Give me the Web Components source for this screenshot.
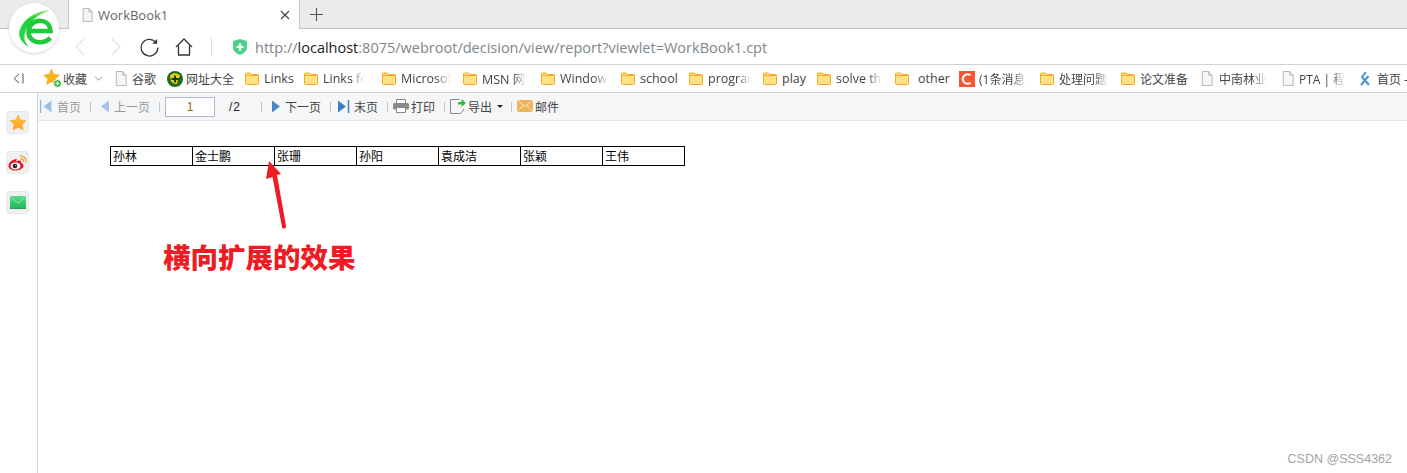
<!DOCTYPE html>
<html lang="zh"><head><meta charset="utf-8"><title>WorkBook1</title>
<style>
html,body{margin:0;padding:0;background:#fff;height:473px;overflow:hidden}
body{font-family:"Open Sans","Noto Sans CJK SC",sans-serif;position:relative;display:flex;flex-direction:column}
</style></head><body>
<browser-tabs></browser-tabs>
<browser-nav></browser-nav>
<bookmark-bar>
  <book-mark w="71" icon="star" gap="5" s="12">收藏<span slot="after" style="display:inline-flex;margin-left:7px"><svg width="9" height="5" viewBox="0 0 10 6"><path d="M1 1l4 4 4-4" fill="none" stroke="#777" stroke-width="1"/></svg></span></book-mark>
  <book-mark w="52" icon="doc" gap="3" s="12">谷歌</book-mark>
  <book-mark w="78" icon="globe" gap="5" s="12">网址大全</book-mark>
  <book-mark w="59" icon="folder">Links</book-mark>
  <book-mark w="78" icon="folder" fade="41">Links for</book-mark>
  <book-mark w="81" icon="folder" fade="50">Microsoft</book-mark>
  <book-mark w="78" icon="folder" fade="44">MSN 网址</book-mark>
  <book-mark w="80" icon="folder" fade="48">Windows</book-mark>
  <book-mark w="68" icon="folder">school</book-mark>
  <book-mark w="74" icon="folder" fade="43">program</book-mark>
  <book-mark w="54" icon="folder">play</book-mark>
  <book-mark w="78" icon="folder" fade="46">solve the</book-mark>
  <book-mark w="64" icon="folder" gap="9">other</book-mark>
  <book-mark w="81" icon="csdn" gap="6" fade="48" s="12">(1条消息)</book-mark>
  <book-mark w="81" icon="folder" fade="50" s="12">处理问题</book-mark>
  <book-mark w="80" icon="folder" s="12">论文准备</book-mark>
  <book-mark w="81" icon="doc" gap="4" fade="48" s="12">中南林业</book-mark>
  <book-mark w="78" icon="doc" gap="3" fade="46" s="12">PTA | 程序</book-mark>
  <book-mark w="47" icon="leaf" gap="3" s="12">首页 -</book-mark>
</bookmark-bar>
<main-area>
  <side-bar slot="side"></side-bar>
  <report-toolbar slot="top"></report-toolbar>
  <report-table slot="body"></report-table>
</main-area>
<red-note></red-note>
<app-logo></app-logo>
<water-mark>CSDN @SSS4362</water-mark>
<script>
const def=(name,html)=>{customElements.define(name,class extends HTMLElement{
  constructor(){super();this.attachShadow({mode:'open'}).innerHTML=html}
})};
const icons={
 doc:`<svg width="12" height="15" viewBox="0 0 14 16" preserveAspectRatio="none"><path d="M1.500 .5h7.500l4 4v11h-11.500z" fill="#f6f6f6" stroke="#b0b0b0"/><path d="M9 .5v4h4" fill="none" stroke="#b0b0b0"/></svg>`,
 star:`<svg width="20" height="20" viewBox="0 0 20 20"><path d="M7.500 0l2.300 5.300 5.600.7-4.100 3.900 1.100 5.700-4.900-2.800-4.900 2.800 1.100-5.700L-.4 6 5.200 5.300z" fill="#f7b417" stroke="#eb9b10" stroke-width=".5"/><circle cx="13.500" cy="14.500" r="4" fill="#3cb44a" stroke="#fff"/><path d="M13.500 12.500v4M11.500 14.500h4" stroke="#fff" stroke-width="1.200"/></svg>`,
 globe:`<svg width="16" height="16" viewBox="0 0 16 16"><circle cx="8" cy="8" r="8" fill="#1d6b1e"/><path d="M3 5a6 6 0 0 1 10 0l-2 3-1 5a6 6 0 0 1-6-3z" fill="#f3d31a"/><path d="M8 4.500v7M4.500 8h7" stroke="#123c12" stroke-width="2.200"/></svg>`,
 folder:`<svg width="14" height="13" viewBox="0 0 14 13"><path d="M.5 2a1 1 0 0 1 1-1h4l1.500 1.500h5.500a1 1 0 0 1 1 1V11.500a1 1 0 0 1-1 1h-11a1 1 0 0 1-1-1z" fill="#ffe082" stroke="#f9a825"/><path d="M1 3.500h12" stroke="#f9a825"/></svg>`,
 csdn:`<svg width="16" height="16" viewBox="0 0 16 16"><rect width="16" height="16" fill="#fc5531"/><path d="M11.500 4.200A4.600 4.600 0 0 0 5 5a4.500 4.500 0 0 0 0 6 4.600 4.600 0 0 0 6.500.8" fill="none" stroke="#fff" stroke-width="2"/></svg>`,
 leaf:`<svg width="10" height="15" viewBox="0 0 10 15"><path d="M6 1L2 6l7 8M8.500 5L1 14" fill="none" stroke="#4e94d4" stroke-width="2"/></svg>`
};
def('browser-tabs',`<style>
:host{display:flex;height:29px;flex:none;background:#ebebeb;box-sizing:border-box;border-bottom:1px solid #c4c4c4}
.pad{width:69px;flex:none;border-right:1px solid #c8c8c8;box-sizing:border-box}
.tab{width:231px;height:29px;flex:none;background:#fff;border-right:1px solid #c8c8c8;box-sizing:border-box;display:flex;align-items:center;padding:0 9px 0 13px;color:#666;font:13px "Open Sans",sans-serif}
.tab span{margin-left:5px;flex:1}
.tab svg.d{margin-top:1px}
.new{margin-left:10px;align-self:center;display:flex}
</style><div class="pad"></div><div class="tab"><svg class="d" width="11" height="14" viewBox="0 0 14 16" preserveAspectRatio="none"><path d="M1.500 .5h7.500l4 4v11h-11.500z" fill="#f4f4f4" stroke="#a8a8a8"/><path d="M9 .5v4h4" fill="none" stroke="#a8a8a8"/></svg><span>WorkBook1</span><svg width="10" height="10" viewBox="0 0 10 10"><path d="M1 1l8 8M9 1l-8 8" stroke="#444" stroke-width="1.200"/></svg></div><div class="new"><svg width="13" height="13" viewBox="0 0 13 13"><path d="M6.500 0v13M0 6.500h13" stroke="#555" stroke-width="1.100"/></svg></div>`);
def('browser-nav',`<style>
:host{display:flex;align-items:center;height:36px;flex:none;box-sizing:border-box;border-bottom:1px solid #d2d2d2;background:#fff;padding:1px 0 0 74px;font:14.5px "Open Sans",sans-serif;color:#80868b}
svg{flex:none;display:block}
b{font-weight:400;color:#222}
.sep{width:1px;height:20px;background:#dcdcdc;margin:0 21px 0 18px}
.url{margin-left:8px;white-space:nowrap}
</style>
<svg width="12" height="18" viewBox="0 0 12 18"><path d="M10 1L2 9l8 8" fill="none" stroke="#e2e2e2" stroke-width="1.300"/></svg>
<svg style="margin-left:24px" width="12" height="18" viewBox="0 0 12 18"><path d="M2 1l8 8-8 8" fill="none" stroke="#e2e2e2" stroke-width="1.300"/></svg>
<svg style="margin-left:18px" width="19" height="19" viewBox="0 0 20 20"><path d="M16.500 4.200A8.800 8.800 0 1 0 18.800 10" fill="none" stroke="#333" stroke-width="1.300"/><path d="M18 1v5h-5z" fill="#333"/></svg>
<svg style="margin-left:16px" width="18" height="18" viewBox="0 0 18 18"><path d="M1 9l8-8 8 8M3.500 7.500v9.500h11V7.500" fill="none" stroke="#333" stroke-width="1.300"/></svg>
<div class="sep"></div>
<svg width="14" height="16" viewBox="0 0 14 16"><path d="M7 0l7 2v6c0 4-3 6.500-7 8-4-1.500-7-4-7-8V2z" fill="#4fd08a"/><path d="M7 4.500v7M3.500 8h7" stroke="#fff" stroke-width="2.200"/></svg>
<div class="url">http://<b>localhost</b>:8075/webroot/decision/view/report?viewlet=WorkBook1.cpt</div>`);
def('bookmark-bar',`<style>
:host{display:flex;align-items:center;height:28px;flex:none;box-sizing:border-box;border-bottom:1px solid #d2d2d2;background:#fff;overflow:hidden}
.tg{width:44px;flex:none;display:flex;justify-content:flex-start;padding-left:13px;box-sizing:border-box}
.row{display:flex;align-items:center}
</style><div class="tg"><svg width="11" height="11" viewBox="0 0 11 11"><path d="M6 1L1 5.500 6 10M10 .5v10" fill="none" stroke="#555"/></svg></div><div class="row"><slot></slot></div>`);
customElements.define('book-mark',class extends HTMLElement{
 constructor(){super();this.attachShadow({mode:'open'})}
 connectedCallback(){
  const w=this.getAttribute('w'),ic=this.getAttribute('icon'),gap=this.getAttribute('gap')||5,fade=this.getAttribute('fade'),s=this.getAttribute('s')||12.5;
  const mask=fade?`width:${fade}px;overflow:hidden;-webkit-mask-image:linear-gradient(90deg,#000 70%,transparent);mask-image:linear-gradient(90deg,#000 70%,transparent);`:'';
  this.shadowRoot.innerHTML=`<style>:host{display:flex;align-items:center;width:${w}px;flex:none;font:${s}px "Open Sans","Noto Sans CJK SC",sans-serif;color:#444;height:27px;white-space:nowrap}
  .i{display:flex;flex:none;width:14px;justify-content:flex-start}
  .i svg{flex:none;display:block}
  .t{margin-left:${gap}px;${mask}}</style><span class="i">${icons[ic]}</span><span class="t"><slot></slot></span><slot name="after"></slot>`;
 }
});
def('main-area',`<style>
:host{display:grid;grid-template-columns:38px 1fr;grid-template-rows:28px 1fr;flex:1;min-height:0}
.s{grid-row:1/3;box-sizing:border-box;border-right:1px solid #d6d6d6}
.t{grid-column:2}.b{grid-column:2}
</style><div class="s"><slot name="side"></slot></div><div class="t"><slot name="top"></slot></div><div class="b"><slot name="body"></slot></div>`);
def('side-bar',`<style>
:host{display:flex;flex-direction:column;align-items:flex-start;gap:17px;padding:18px 0 0 6px}
.b{width:23px;height:23px;box-sizing:border-box;border-radius:4px;background:#f0f0f0;border:1px solid #e8e8e8;display:flex;align-items:center;justify-content:center}
</style>
<svg width="0" height="0" style="position:absolute"><defs><linearGradient id="st" x1="0" y1="0" x2="0" y2="1"><stop offset="0" stop-color="#ffc743"/><stop offset="1" stop-color="#fb9f24"/></linearGradient><linearGradient id="ml" x1="0" y1="0" x2="0" y2="1"><stop offset="0" stop-color="#57dc86"/><stop offset="1" stop-color="#22b859"/></linearGradient></defs></svg>
<div class="b"><svg width="16" height="15" viewBox="0 0 16 15"><path d="M8 0l2.400 5 5.600.7-4.100 3.800 1.100 5.500L8 12.300 3 15l1.100-5.500L0 5.700 5.600 5z" fill="url(#st)" stroke="#f19a1a" stroke-width=".5"/></svg></div>
<div class="b"><svg width="19" height="16" viewBox="0 0 19 16"><path d="M8 4C3.500 5 .5 8 .5 11c0 2.500 3 4.500 7 4.500 4.500 0 8-2.300 8-5 0-1.700-1.500-2.300-2.500-2.500.7-2-.5-3-3-2.300L8 6.500C9 4 9 3.800 8 4z" fill="#e6162d"/><ellipse cx="7.500" cy="11" rx="5" ry="3.500" fill="#fff"/><circle cx="7" cy="11" r="2.300" fill="#222"/><circle cx="7.700" cy="10.500" r=".6" fill="#fff"/><path d="M12 1.200c3.500-.5 6.500 2 5.800 6M12.500 3.800c1.800-.3 3.300 1 2.800 3" fill="none" stroke="#f59a23" stroke-width="1.300"/></svg></div>
<div class="b"><svg width="16" height="13" viewBox="0 0 16 13"><rect width="16" height="13" rx="1" fill="url(#ml)"/><path d="M0 .5l8 6.500 8-6.500" fill="none" stroke="#9be8b6" stroke-width=".8"/><path d="M0 12.500h16" stroke="#1fa350"/></svg></div>`);
def('tool-sep',`<style>:host{display:block;width:1px;height:10px;background:#c4c4c4;flex:none}</style>`);
def('tool-btn',`<style>:host{display:flex;align-items:center;flex:none;white-space:nowrap;font:12px "Noto Sans CJK SC",sans-serif;color:#444;padding-bottom:1px}
:host([off]){color:#9a9a9a}
::slotted(svg){display:block;flex:none}</style><slot name="i"></slot><slot></slot>`);
def('report-toolbar',`<style>
:host{display:flex;align-items:center;height:28px;box-sizing:border-box;background:#f5f6f8;border-bottom:1px solid #e4e6ea;padding-left:2px;font:12px "Noto Sans CJK SC",sans-serif}
.in{width:50px;height:20px;box-sizing:border-box;border:1px solid #b1b8cc;background:#fff;color:#9c6a00;font:12px "Liberation Sans",sans-serif;display:flex;align-items:center;justify-content:center;flex:none}
.tot{width:32px;margin-left:14px;color:#222;font:12px "Liberation Sans",sans-serif;flex:none;letter-spacing:1px}
svg{display:block;flex:none}
</style>
<tool-btn off><svg slot="i" width="13" height="13" viewBox="0 0 13 13" style="margin:0 4px 0 0"><path d="M.5 0v13" stroke="#8fb4dc" stroke-width="1.500"/><path d="M11.500 .5v12L3.500 6.500z" fill="#9cc0e2"/></svg>首页</tool-btn>
<tool-sep style="margin:0 9px"></tool-sep>
<tool-btn off><svg slot="i" width="11" height="13" viewBox="0 0 11 13" style="margin-right:3px"><path d="M9 .5v12L1 6.500z" fill="#a5c4e2"/></svg>上一页</tool-btn>
<tool-sep style="margin:0 5px 0 9px"></tool-sep>
<div class="in">1</div><div class="tot">/2</div>
<tool-sep style="margin:0 9px 0 0"></tool-sep>
<tool-btn><svg slot="i" width="11" height="13" viewBox="0 0 11 13" style="margin-right:3px"><path d="M1 .5v12l8-6z" fill="#4a88c7"/></svg>下一页</tool-btn>
<tool-sep style="margin:0 7px 0 9px"></tool-sep>
<tool-btn><svg slot="i" width="12" height="13" viewBox="0 0 12 13" style="margin-right:4px"><path d="M0 .5v12l8-6z" fill="#3f7fc2"/><path d="M10.500 0v13" stroke="#3f7fc2" stroke-width="1.500"/></svg>末页</tool-btn>
<tool-sep style="margin:0 5px 0 9px"></tool-sep>
<tool-btn><svg slot="i" width="16" height="14" viewBox="0 0 16 14" style="margin-right:2px"><path d="M3.500.5h9v4h-9z" fill="#fff" stroke="#888"/><rect y="4" width="16" height="6.500" rx="1.500" fill="#8a8a8a"/><path d="M3.500 8.500h9v5h-9z" fill="#fff" stroke="#888"/></svg>打印</tool-btn>
<tool-sep style="margin:0 5px 0 9px"></tool-sep>
<tool-btn><svg slot="i" width="16" height="16" viewBox="0 0 16 16" style="margin-right:2px"><path d="M.5 1.500h9M.5 1.500V15.500h10l3-3V11" fill="none" stroke="#888"/><path d="M8 4h3.500V1l4.500 4-4.500 4V6.500H8z" fill="#3cb44a"/></svg>导出<svg width="6" height="3" viewBox="0 0 6 3" style="margin-left:5px"><path d="M0 0h6L3 3z" fill="#222"/></svg></tool-btn>
<tool-sep style="margin:0 5px 0 8px"></tool-sep>
<tool-btn><svg slot="i" width="16" height="12" viewBox="0 0 16 12" style="margin-right:2px"><rect width="16" height="12" fill="#edb35c"/><path d="M0 0l8 6.500L16 0M0 12l6-6.500M16 12l-6-6.500" fill="none" stroke="#fbe6c4"/></svg>邮件</tool-btn>`);
def('report-table',`<style>
:host{display:block;padding:25px 0 0 72px}
.g{display:grid;grid-template-columns:repeat(7,82px);width:575px;box-sizing:border-box;border:1px solid #000;height:20px;font:12px/18px "Noto Sans CJK SC",sans-serif;color:#000}
.g div{box-sizing:border-box;border-right:1px solid #000;padding-left:2px;white-space:nowrap}
.g div:last-child{border-right:0}
</style><div class="g"><div>孙林</div><div>金士鹏</div><div>张珊</div><div>孙阳</div><div>袁成洁</div><div>张颖</div><div>王伟</div></div>`);
def('red-note',`<style>
:host{position:absolute;left:163px;top:159px;display:block;width:200px;height:116px}
svg{position:absolute;left:93px;top:-1px}
.t{position:absolute;left:0;top:82px;margin-top:-2px;font:900 27.500px/34px "Noto Sans CJK SC",sans-serif;color:#ed1c24;white-space:nowrap}
</style><svg width="40" height="72" viewBox="0 0 40 72"><path d="M13 3L25 16l-4 1 9 51a2 2 0 0 1-4 1l-9.500-50-6.500 2z" fill="#ed1c24"/></svg><div class="t">横向扩展的效果</div>`);
def('app-logo',`<style>
:host{position:absolute;left:9px;top:3px;width:50px;height:50px;display:block;border-radius:50%;background:#fff;box-shadow:0 1px 3px rgba(0,0,0,.18)}
svg{display:block}
</style><svg width="50" height="50" viewBox="0 0 50 50">
<defs><linearGradient id="lf" x1="1" y1="0" x2="0" y2="1"><stop offset="0" stop-color="#9bea6e"/><stop offset=".45" stop-color="#25d03f"/><stop offset="1" stop-color="#2ad84a"/></linearGradient></defs>
<path d="M41 7C27 8 14 16 10.500 28c-1.500 6 2 12 9.500 16-4-4.500-5.500-9-4-14C18.500 20 28 12 41 7z" fill="url(#lf)"/>
<path d="M21 28H41.500C41 21 36 17.800 31 17.800 24 17.800 19.500 23 19.500 29S24 39.300 31 39.300C35 39.300 38.500 37.800 41.500 35" fill="none" stroke="#1ecb3b" stroke-width="4.600"/>
</svg>`);
def('water-mark',`<style>:host{position:absolute;right:15px;top:451px;font:12.500px/16px "Liberation Sans",sans-serif;color:#a3a3a3;white-space:nowrap}</style><slot></slot>`);
</script>
</body></html>
